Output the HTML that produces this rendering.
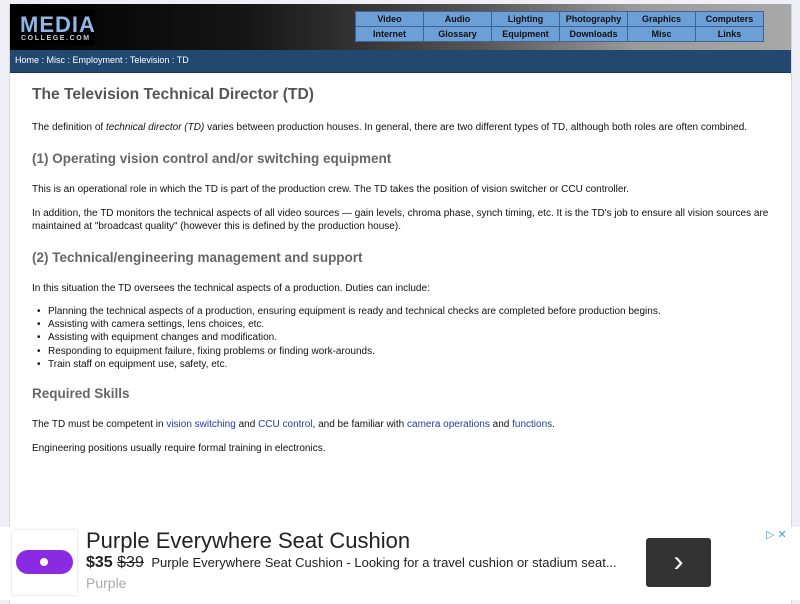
<!DOCTYPE html>
<html><head><style>
body{margin:0;background:#eef0f6;font-family:"Liberation Sans",Arial,sans-serif;width:800px;height:600px;overflow:hidden;position:relative}
#wrap{position:absolute;left:9px;top:4px;width:781px;height:600px;background:#fff;border-left:1px solid #d4d6dc;border-right:1px solid #d4d6dc}
#hdr{position:absolute;left:0;top:0;width:781px;height:46px;background:linear-gradient(90deg,#000 0%,#151515 30%,#555 60%,#9a9a9a 80%,#a8a8a8 100%)}
#logo{position:absolute;left:5px;top:5px;width:80px;height:36px;background:#000}
#logo .m{position:absolute;left:5px;top:3px;font:bold 22px "Liberation Sans",sans-serif;color:#8fb6e6;letter-spacing:1px}
#logo .c{position:absolute;left:6px;top:26px;font:bold 7px "Liberation Sans",sans-serif;color:#ccd;letter-spacing:1.6px}
#nav{position:absolute;left:345px;top:7px;border-collapse:collapse}
#nav td{width:67px;height:14px;background:#6c9fd6;border:1px solid #3d6494;font:bold 9px "Liberation Sans",sans-serif;text-align:center;color:#111;padding:0}
#bc{position:absolute;left:0;top:46px;width:781px;height:23px;background:#22486f;border-bottom:1px solid #163554;color:#fff;font-size:9px;line-height:21px;padding-left:5px;box-sizing:border-box}
.t{position:absolute;left:22px;font-size:10px;color:#111;white-space:nowrap}
h1,h2{margin:0;position:absolute;left:22px;color:#555;white-space:nowrap}
h1{font-size:15.6px}
h2{font-size:13.5px;color:#666}
a{color:#1a3fa0;text-decoration:none}
.li{position:absolute;left:38px;font-size:10px;color:#111;white-space:nowrap}
.li:before{content:"•";position:absolute;left:-11px}
#ad{position:absolute;left:0;top:527px;width:800px;height:73px;background:#fff}
</style></head><body>
<div id="wrap">
<div id="hdr"><div id="logo"><div class="m">MEDIA</div><div class="c">COLLEGE.COM</div></div>
<table id="nav"><tr><td>Video</td><td>Audio</td><td>Lighting</td><td>Photography</td><td>Graphics</td><td>Computers</td></tr>
<tr><td>Internet</td><td>Glossary</td><td>Equipment</td><td>Downloads</td><td>Misc</td><td>Links</td></tr></table></div>
<div id="bc">Home : Misc : Employment : Television : TD</div>
<h1 style="top:82px">The Television Technical Director (TD)</h1>
<div class="t" style="top:118px">The definition of <i>technical director (TD)</i> varies between production houses. In general, there are two different types of TD, although both roles are often combined.</div>
<h2 style="top:147px">(1) Operating vision control and/or switching equipment</h2>
<div class="t" style="top:180px">This is an operational role in which the TD is part of the production crew. The TD takes the position of vision switcher or CCU controller.</div>
<div class="t" style="top:203px;line-height:13px">In addition, the TD monitors the technical aspects of all video sources — gain levels, chroma phase, synch timing, etc. It is the TD's job to ensure all vision sources are<br>maintained at "broadcast quality" (however this is defined by the production house).</div>
<h2 style="top:246px">(2) Technical/engineering management and support</h2>
<div class="t" style="top:279px">In this situation the TD oversees the technical aspects of a production. Duties can include:</div>
<div class="li" style="top:302px">Planning the technical aspects of a production, ensuring equipment is ready and technical checks are completed before production begins.</div>
<div class="li" style="top:315px">Assisting with camera settings, lens choices, etc.</div>
<div class="li" style="top:328px">Assisting with equipment changes and modification.</div>
<div class="li" style="top:342px">Responding to equipment failure, fixing problems or finding work-arounds.</div>
<div class="li" style="top:355px">Train staff on equipment use, safety, etc.</div>
<h2 style="top:382px">Required Skills</h2>
<div class="t" style="top:415px">The TD must be competent in <a>vision switching</a> and <a>CCU control</a>, and be familiar with <a>camera operations</a> and <a>functions</a>.</div>
<div class="t" style="top:439px">Engineering positions usually require formal training in electronics.</div>
</div>
<div id="ad">
<div style="position:absolute;left:12px;top:3px;width:65px;height:65px;background:#fff;box-shadow:0 0 2px #ccc"><div style="position:absolute;left:4px;top:20px;width:57px;height:24px;border-radius:12px;background:#8a2be2"></div><div style="position:absolute;left:28px;top:28px;width:8px;height:8px;border-radius:4px;background:#fff"></div></div>
<div style="position:absolute;left:86px;top:1px;font-size:22px;color:#222">Purple Everywhere Seat Cushion</div>
<div style="position:absolute;left:86px;top:27px;font-size:16px;color:#222"><b>$35</b> <s>$39</s> <span style="font-size:13px;margin-left:3px">Purple Everywhere Seat Cushion - Looking for a travel cushion or stadium seat...</span></div>
<div style="position:absolute;left:86px;top:48px;font-size:14px;color:#aaa">Purple</div>
<div style="position:absolute;left:646px;top:11px;width:65px;height:49px;background:#333;border-radius:3px;color:#fff;font-size:30px;text-align:center;line-height:47px">›</div>
<div style="position:absolute;left:766px;top:1px;font-size:11px;color:#3a9fe0">▷ ✕</div>
</div>
</body></html>
